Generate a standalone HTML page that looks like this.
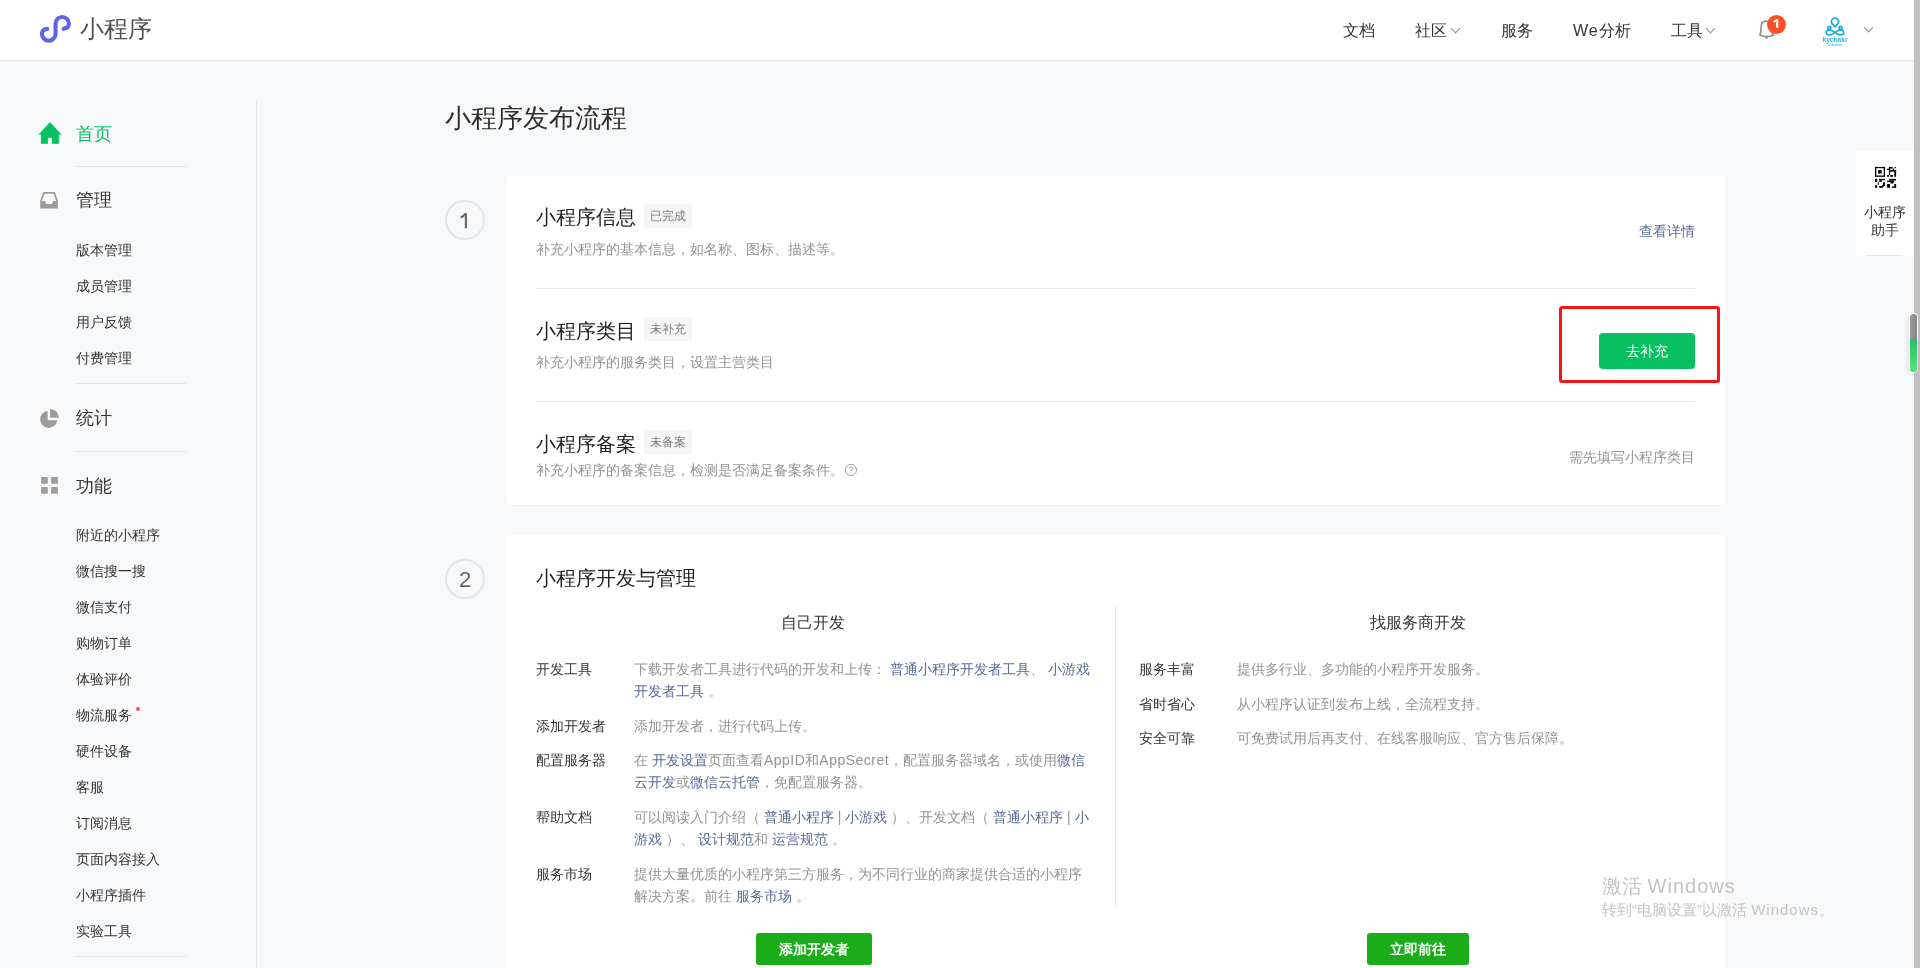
<!DOCTYPE html>
<html><head><meta charset="utf-8">
<style>
*{margin:0;padding:0;box-sizing:border-box}
html,body{width:1920px;height:968px;overflow:hidden}
body{font-family:"Liberation Sans",sans-serif;background:#f7f8fa;color:#353535;position:relative}
.a{position:absolute;white-space:nowrap}
#hdr{position:absolute;left:0;top:0;width:1914px;height:61px;background:#fff;box-shadow:0 1px 1px rgba(0,0,0,0.03);border-bottom:1px solid #e3e4e7}
.nav{font-size:16px;line-height:16px;color:#353535;top:22.5px}
.chev{position:absolute;width:7px;height:7px;border-right:1.8px solid #909090;border-bottom:1.8px solid #909090;transform:rotate(45deg)}
.s1{font-size:18px;line-height:18px;color:#353535}
.s2{font-size:14px;line-height:14px;color:#353535}
.dv{position:absolute;left:76px;width:110px;height:1px;background:#e4e5e8}
.card{position:absolute;left:506px;width:1219px;background:#fff;border-radius:4px;box-shadow:0 1px 1px rgba(0,0,0,0.04)}
.step{position:absolute;left:445px;width:40px;height:40px;border:2px solid #e3e5e8;border-radius:50%;text-align:center;font-size:22px;line-height:38px;color:#666}
.t20{font-size:20px;line-height:20px;color:#1f1f1f}
.tag{position:absolute;left:644px;height:24px;width:48px;background:#f4f5f7;border-radius:2px;font-size:12px;line-height:24px;text-align:center;color:#7d7d7d}
.desc{font-size:14px;line-height:14px;color:#939393}
.hl{position:absolute;left:536px;width:1159px;height:1px;background:#e6e7ea}
.lnk{color:#576b95}
.lbl{font-size:14px;line-height:14px;color:#353535}
.row{position:absolute;font-size:14px;line-height:22.7px;color:#939393;white-space:normal}
</style></head><body>
<div id="root" style="position:absolute;left:0;top:0;width:1920px;height:968px;will-change:transform;background:#f7f8fa">
<div id="hdr"></div>
<!-- logo -->
<svg class="a" style="left:36px;top:11px" width="40" height="36" viewBox="36 11 40 36">
<path d="M47.2 28.9 Q41.95 29.4 41.95 34 A6.8 6.8 0 0 0 55.55 34 L55.55 23.6 A6.65 6.65 0 0 1 68.85 23.6 Q68.85 28.3 63.5 28.8" fill="none" stroke="#6064ec" stroke-width="4.1" stroke-linecap="round"/>
</svg>
<div class="a" style="left:80px;top:17px;font-size:24px;line-height:24px;color:#4f4f4f">小程序</div>
<div class="a nav" style="left:1343px">文档</div>
<div class="a nav" style="left:1415px">社区</div><div class="chev" style="left:1451.5px;top:24.5px"></div>
<div class="a nav" style="left:1501px">服务</div>
<div class="a nav" style="left:1573px"><span style="letter-spacing:1px">We</span>分析</div>
<div class="a nav" style="left:1671px">工具</div><div class="chev" style="left:1706.5px;top:24.5px"></div>
<!-- bell -->
<svg class="a" style="left:1755px;top:18px" width="24" height="24" viewBox="1755 18 24 24">
<path d="M1759.9 35.1 L1760.9 31.5 L1761.2 26.2 C1761.4 23.1 1763.3 21.3 1766.1 21.2 C1768.9 21.3 1770.8 23.1 1771 26.2 L1771.4 31.5 L1773.7 35.1 Q1766.8 38.3 1759.9 35.1 Z" fill="none" stroke="#8e8e8e" stroke-width="1.7" stroke-linejoin="round"/>
<circle cx="1766.5" cy="37.6" r="1.3" fill="#8e8e8e"/>
</svg>
<div class="a" style="left:1767px;top:15px;width:19px;height:19px;border-radius:50%;background:#fb4f27"></div><svg class="a" style="left:1767px;top:15px" width="19" height="19" viewBox="1767 15 19 19"><path d="M1777.2 19.2 L1777.2 27.8 M1777.2 19.5 Q1776 21.2 1773.6 21.8" fill="none" stroke="#fff" stroke-width="2.2"/></svg>
<!-- avatar -->
<svg class="a" style="left:1820px;top:16px" width="30" height="31" viewBox="0 0 30 31">
<g fill="none" stroke="#12abd3" stroke-width="1.7">
<path d="M15 11 C13.6 9.2 11.4 7.6 11.4 5.6 A3.6 3.6 0 1 1 18.6 5.6 C18.6 7.6 16.4 9.2 15 11 Z"/>
<rect x="8" y="10.6" width="2.8" height="2.8" rx="1"/><rect x="19.2" y="10.6" width="2.8" height="2.8" rx="1"/>
<path d="M15 16.5 C12 13.5 6.3 13 6.3 16.5 C6.3 20 12 19.5 15 16.5 C18 13.5 23.7 13 23.7 16.5 C23.7 20 18 19.5 15 16.5"/>
</g>
<text x="15" y="26.3" font-size="7.2" text-anchor="middle" fill="#12abd3" font-family="Liberation Sans" font-weight="bold" textLength="25" lengthAdjust="spacingAndGlyphs" opacity="0.9">kychakr</text>
<text x="15" y="30" font-size="3.5" text-anchor="middle" fill="#12abd3" font-family="Liberation Sans">to botton</text>
</svg>
<div class="chev" style="left:1864.5px;top:24px;width:7px;height:7px"></div>

<!-- sidebar -->
<div class="a" style="left:256px;top:100px;width:1px;height:868px;background:#e4e5e8"></div>
<svg class="a" style="left:38px;top:122px" width="24" height="22" viewBox="38 122 24 22">
<path d="M50 122.3 L61.3 134.6 L58.8 134.6 L58.8 143.8 L52 143.8 L52 137.8 L47.9 137.8 L47.9 143.8 L41.1 143.8 L41.1 134.6 L38.8 134.6 Z" fill="#07c160" stroke="#07c160" stroke-width="0.3" stroke-linejoin="round"/>
</svg>
<div class="a s1" style="left:76px;top:124.5px;color:#07c160">首页</div>
<div class="dv" style="top:166px"></div>
<svg class="a" style="left:39px;top:191px" width="20" height="19" viewBox="39 191 20 19">
<path fill-rule="evenodd" fill="#9c9c9c" d="M43.3 192.1 L54.8 192.1 L57.9 200.5 L57.9 208.6 L40.2 208.6 L40.2 200.5 Z M44.6 193.8 L53.5 193.8 L56.2 201 L53.1 201 L52.1 204.1 L46.1 204.1 L45 201 L41.8 201 Z"/>
</svg>
<div class="a s1" style="left:76px;top:191px">管理</div>
<div class="a s2" style="left:76px;top:243px">版本管理</div>
<div class="a s2" style="left:76px;top:279px">成员管理</div>
<div class="a s2" style="left:76px;top:315px">用户反馈</div>
<div class="a s2" style="left:76px;top:351px">付费管理</div>
<div class="dv" style="top:383px"></div>
<svg class="a" style="left:39px;top:408px" width="21" height="21" viewBox="39 408 21 21">
<path d="M47.6 410.8 A8.6 8.6 0 1 0 57.35 420.2 L47.6 420.2 Z" fill="#9c9c9c"/>
<path d="M50.1 409 A8.8 8.8 0 0 1 58.9 417.7 L50.1 417.7 Z" fill="#9c9c9c"/>
</svg>
<div class="a s1" style="left:76px;top:409px">统计</div>
<div class="dv" style="top:451px"></div>
<svg class="a" style="left:40px;top:476px" width="19" height="19" viewBox="0 0 19 19">
<g fill="#9c9c9c"><rect x="1.1" y="1" width="6.7" height="6.7" rx="0.6"/><rect x="11.1" y="1" width="6.8" height="6.7" rx="0.6"/>
<rect x="1.1" y="11.1" width="6.7" height="6.7" rx="0.6"/><rect x="11.1" y="11.1" width="6.8" height="6.7" rx="0.6"/></g>
</svg>
<div class="a s1" style="left:76px;top:476.5px">功能</div>
<div class="a s2" style="left:76px;top:528px">附近的小程序</div>
<div class="a s2" style="left:76px;top:564px">微信搜一搜</div>
<div class="a s2" style="left:76px;top:600px">微信支付</div>
<div class="a s2" style="left:76px;top:636px">购物订单</div>
<div class="a s2" style="left:76px;top:672px">体验评价</div>
<div class="a s2" style="left:76px;top:708px">物流服务</div>
<div class="a" style="left:136px;top:707px;width:4px;height:4px;border-radius:50%;background:#fa5151"></div>
<div class="a s2" style="left:76px;top:744px">硬件设备</div>
<div class="a s2" style="left:76px;top:780px">客服</div>
<div class="a s2" style="left:76px;top:816px">订阅消息</div>
<div class="a s2" style="left:76px;top:852px">页面内容接入</div>
<div class="a s2" style="left:76px;top:888px">小程序插件</div>
<div class="a s2" style="left:76px;top:924px">实验工具</div>
<div class="dv" style="top:956px"></div>

<!-- main -->
<div class="a" style="left:445px;top:104.5px;font-size:26px;line-height:26px;color:#2e2e2e">小程序发布流程</div>
<div class="step" style="top:200px"></div><svg class="a" style="left:455px;top:208px" width="20" height="24" viewBox="455 208 20 24"><path d="M465.9 213.2 L465.9 228.3 M465.9 213.4 Q463.6 216.3 460.6 217.4" fill="none" stroke="#666" stroke-width="2.1"/></svg>
<div class="card" style="top:176px;height:329px"></div>
<div class="a t20" style="left:536px;top:207px">小程序信息</div>
<div class="tag" style="top:204px">已完成</div>
<div class="a desc" style="left:536px;top:242px">补充小程序的基本信息，如名称、图标、描述等。</div>
<div class="a desc lnk" style="left:1639px;top:224px">查看详情</div>
<div class="hl" style="top:288px"></div>
<div class="a t20" style="left:536px;top:320.5px">小程序类目</div>
<div class="tag" style="top:317px">未补充</div>
<div class="a desc" style="left:536px;top:355px">补充小程序的服务类目，设置主营类目</div>
<div class="a" style="left:1599px;top:333px;width:96px;height:36px;background:#07c160;border-radius:4px;color:#fff;font-size:14px;line-height:36px;text-align:center;font-weight:500">去补充</div>
<div class="a" style="left:1559px;top:306px;width:161px;height:77px;border:3px solid #fa1616;border-radius:3px"></div>
<div class="hl" style="top:401px"></div>
<div class="a t20" style="left:536px;top:433.5px">小程序备案</div>
<div class="tag" style="top:430px">未备案</div>
<div class="a desc" style="left:536px;top:463px">补充小程序的备案信息，检测是否满足备案条件。</div>
<svg class="a" style="left:844px;top:463px" width="14" height="14" viewBox="0 0 14 14">
<circle cx="7" cy="7" r="5.5" fill="none" stroke="#a0a0a0" stroke-width="1"/>
<path d="M5.3 5.6 A1.7 1.7 0 1 1 7 7.3 L7 8.3" fill="none" stroke="#a0a0a0" stroke-width="1"/>
<circle cx="7" cy="9.8" r="0.6" fill="#a0a0a0"/>
</svg>
<div class="a desc" style="left:1569px;top:450px">需先填写小程序类目</div>

<div class="step" style="top:559px">2</div>
<div class="card" style="top:535px;height:440px"></div>
<div class="a t20" style="left:536px;top:568px">小程序开发与管理</div>
<div class="a" style="left:781px;top:615px;font-size:16px;line-height:16px;color:#353535">自己开发</div>
<div class="a" style="left:1370px;top:615px;font-size:16px;line-height:16px;color:#353535">找服务商开发</div>
<div class="a" style="left:1115px;top:606px;width:1px;height:301px;background:#e6e7ea"></div>

<div class="a lbl" style="left:536px;top:662px">开发工具</div>
<div class="row" style="left:634px;top:657.5px;width:460px">下载开发者工具进行代码的开发和上传： <span class="lnk">普通小程序开发者工具</span>、 <span class="lnk">小游戏开发者工具</span> 。</div>
<div class="a lbl" style="left:536px;top:719px">添加开发者</div>
<div class="row" style="left:634px;top:714.5px;width:460px">添加开发者，进行代码上传。</div>
<div class="a lbl" style="left:536px;top:753px">配置服务器</div>
<div class="row" style="left:634px;top:748.5px;width:460px">在 <span class="lnk">开发设置</span>页面查看<span style="letter-spacing:0.5px">AppID</span>和<span style="letter-spacing:0.5px">AppSecret</span>，配置服务器域名，或使用<span class="lnk">微信云开发</span>或<span class="lnk">微信云托管</span>，免配置服务器。</div>
<div class="a lbl" style="left:536px;top:810px">帮助文档</div>
<div class="row" style="left:634px;top:805.5px;width:460px">可以阅读入门介绍（ <span class="lnk">普通小程序</span> | <span class="lnk">小游戏</span> ）、开发文档（ <span class="lnk">普通小程序</span> | <span class="lnk">小游戏</span> ）、 <span class="lnk">设计规范</span>和 <span class="lnk">运营规范</span> 。</div>
<div class="a lbl" style="left:536px;top:867px">服务市场</div>
<div class="row" style="left:634px;top:862.5px;width:460px">提供大量优质的小程序第三方服务，为不同行业的商家提供合适的小程序解决方案。前往 <span class="lnk">服务市场</span> 。</div>
<div class="a" style="left:756px;top:933px;width:116px;height:32px;background:#1aad19;border-radius:3px;color:#fff;font-size:14px;line-height:32px;text-align:center;font-weight:700">添加开发者</div>

<div class="a lbl" style="left:1139px;top:662px">服务丰富</div>
<div class="row" style="left:1237px;top:657.5px;width:460px">提供多行业、多功能的小程序开发服务。</div>
<div class="a lbl" style="left:1139px;top:697px">省时省心</div>
<div class="row" style="left:1237px;top:692.5px;width:460px">从小程序认证到发布上线，全流程支持。</div>
<div class="a lbl" style="left:1139px;top:731px">安全可靠</div>
<div class="row" style="left:1237px;top:726.5px;width:460px">可免费试用后再支付、在线客服响应、官方售后保障。</div>
<div class="a" style="left:1367px;top:933px;width:102px;height:32px;background:#1aad19;border-radius:3px;color:#fff;font-size:14px;line-height:32px;text-align:center;font-weight:700">立即前往</div>

<!-- right widget -->
<div class="a" style="left:1856px;top:150px;width:58px;height:106px;background:#fff"></div>
<div class="a" style="left:1866px;top:255px;width:37px;height:1px;background:#e4e5e8"></div>
<svg class="a" style="left:1874px;top:165px" width="24" height="24" viewBox="1874 165 24 24"><g fill="#000"><rect x="1875" y="166.9" width="10" height="1.3"/><rect x="1875" y="175.5" width="10" height="1.3"/><rect x="1875" y="166.9" width="1.3" height="9.9"/><rect x="1883.7" y="166.9" width="1.3" height="9.9"/><rect x="1878.1" y="170.1" width="3.6" height="3.5"/><rect x="1889.1" y="167" width="3.6" height="1.5"/><rect x="1894.6" y="166.9" width="1.3" height="1.3"/><rect x="1887.1" y="168.7" width="1.9" height="1.3"/><rect x="1888.9" y="167" width="1.3" height="7.8"/><rect x="1890" y="170.1" width="6.1" height="1.5"/><rect x="1894.3" y="170.1" width="1.8" height="6.7"/><rect x="1892.6" y="168.5" width="1.6" height="1.6"/><rect x="1887.1" y="175" width="1.8" height="1.8"/><rect x="1890.2" y="175" width="2.7" height="1.8"/><rect x="1875" y="178.9" width="2.2" height="3"/><rect x="1879.2" y="178.9" width="5.8" height="1.3"/><rect x="1879.2" y="178.9" width="2.5" height="3"/><rect x="1877.7" y="182.2" width="1.1" height="2.7"/><rect x="1883.1" y="182.2" width="1.9" height="3.8"/><rect x="1875" y="185.3" width="2.2" height="2.5"/><rect x="1879.2" y="186" width="3.6" height="1.8"/><rect x="1882" y="185" width="2" height="1.5"/><rect x="1889.1" y="178.9" width="6.9" height="1.7"/><rect x="1887.1" y="180.6" width="1.8" height="1.4"/><rect x="1889.1" y="180.6" width="5" height="1.6"/><rect x="1890.5" y="182" width="3" height="1.5"/><rect x="1887.1" y="184" width="2.9" height="3.8"/><rect x="1894.3" y="184" width="1.8" height="3.8"/><rect x="1892" y="186.4" width="4.1" height="1.4"/></g></svg>
<div class="a" style="left:1864px;top:204px;width:42px;font-size:14px;line-height:17.5px;color:#353535;white-space:normal;text-align:center">小程序<br>助手</div>

<!-- scrollbar -->
<div class="a" style="left:1914px;top:0;width:6px;height:968px;background:#c1c1c1"></div>
<div class="a" style="left:1909px;top:313px;width:9px;height:60px;border-radius:5px;background:#fff;box-shadow:-2px 2px 4px rgba(0,0,0,0.08)"></div>
<div class="a" style="left:1910px;top:314px;width:7px;height:58px;border-radius:4px;overflow:hidden;background:linear-gradient(90deg,#9a9a9a,#858585)">
<div style="position:absolute;left:0;top:25px;width:7px;height:33px;background:linear-gradient(180deg,#21c466,#5fe07a)"></div></div>

<!-- watermark -->
<div class="a" style="left:1602px;top:876px;font-size:20px;line-height:20px;color:#c3c3c3;font-weight:350">激活 <span style="letter-spacing:1px">Windows</span></div>
<div class="a" style="left:1602px;top:901.5px;font-size:15px;line-height:15px;color:#c3c3c3;font-weight:350">转到“电脑设置”以激活 <span style="letter-spacing:1px">Windows</span>。</div>
</div>
</body></html>
